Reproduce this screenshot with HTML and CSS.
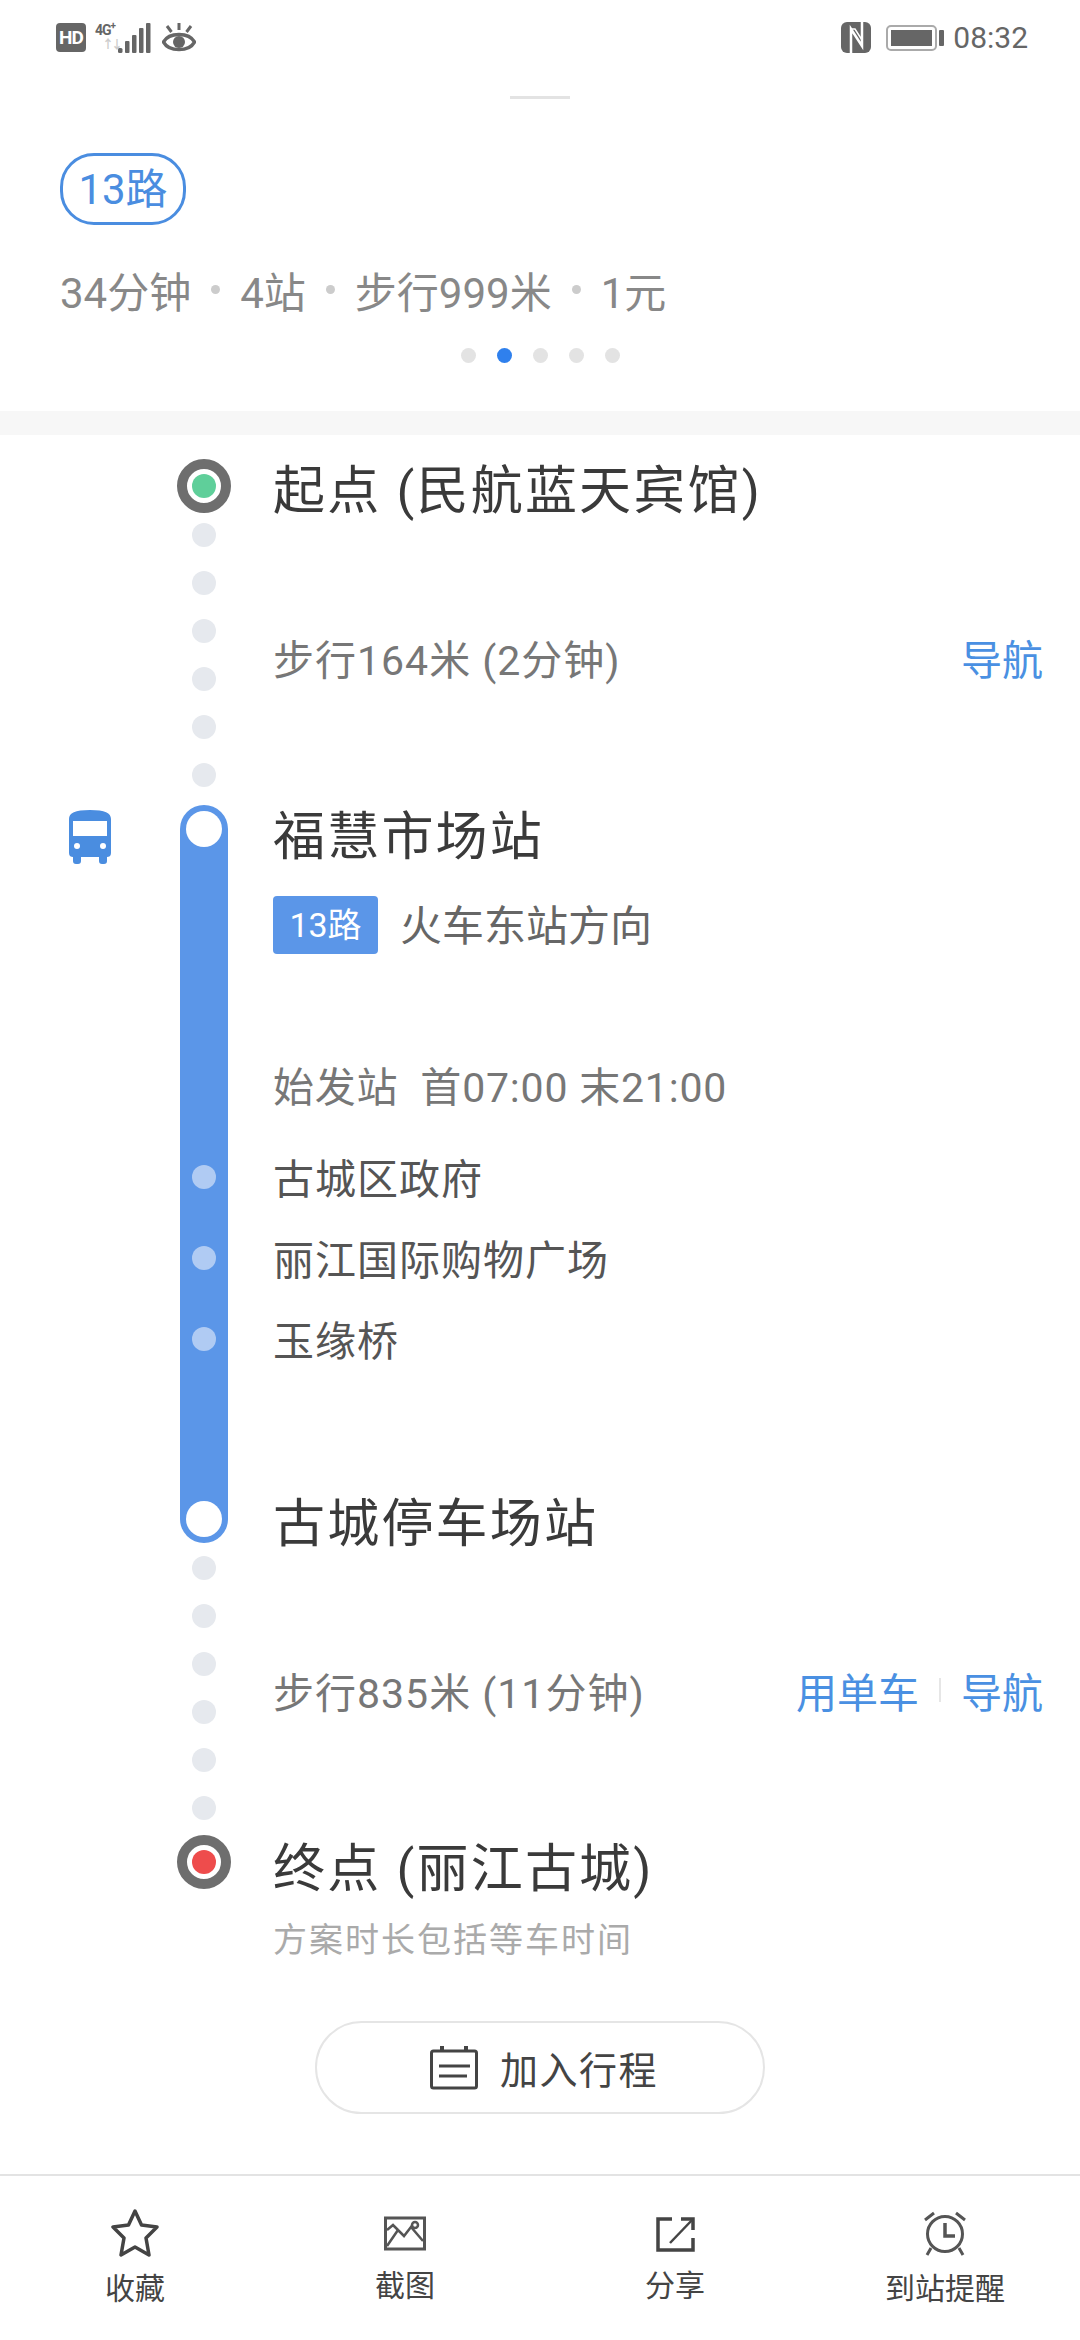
FILE: index.html
```html
<!DOCTYPE html>
<html lang="zh-CN">
<head>
    <meta charset="UTF-8">
    <meta name="viewport" content="width=device-width, initial-scale=1.0">
    <title>公交路线详情</title>
    <link rel="stylesheet" href="styles.css">
</head>
<body>
<div class="page">
    <div class="status-bar">
        <div class="status-left">
            <span class="hd">HD</span>
            <span class="net"><span class="net-label">4G<sup>+</sup></span><span class="net-arrows">↑↓</span></span>
            <svg class="signal" width="33" height="30" viewBox="0 0 33 30">
                <rect x="0" y="25" width="4.5" height="5" rx="1.5"/>
                <rect x="7" y="18" width="4.5" height="12" rx="1"/>
                <rect x="14" y="12" width="4.5" height="18" rx="1"/>
                <rect x="21" y="5" width="4.5" height="25" rx="1"/>
                <rect x="28" y="0" width="4.5" height="30" rx="1"/>
            </svg>
            <svg class="eye" width="34" height="32" viewBox="0 0 34 32">
                <path d="M1.5 20C7 10 27 10 32.5 20C27 30 7 30 1.5 20Z" fill="none" stroke="#666" stroke-width="3.5"/>
                <circle cx="17" cy="20" r="6" fill="#666"/>
                <path d="M17 1V8M5 4L9.5 10M29 4L24.5 10" stroke="#666" stroke-width="3" fill="none"/>
            </svg>
        </div>
        <div class="status-right">
            <svg class="nfc" width="30" height="31" viewBox="0 0 30 31">
                <rect width="30" height="31" rx="6" fill="#666"/>
                <path d="M10 31V7L21 24V0" fill="none" stroke="#fff" stroke-width="2.5"/>
                <path d="M10 7H14L21 18" fill="none" stroke="#fff" stroke-width="1.5"/>
            </svg>
            <span class="battery"><span class="battery-fill"></span></span>
            <span class="battery-tip"></span>
            <span class="clock">08:32</span>
        </div>
    </div>

    <div class="summary">
        <div class="handle"></div>
        <span class="line-chip">13路</span>
        <div class="facts">
            <span>34分钟</span><i></i><span>4站</span><i></i><span>步行999米</span><i></i><span>1元</span>
        </div>
        <div class="pager">
            <span></span><span class="active"></span><span></span><span></span><span></span>
        </div>
    </div>
    <div class="band"></div>

    <div class="route">
        <div class="row row-start">
            <div class="mode"></div>
            <div class="rail"><span class="marker marker-green"></span></div>
            <div class="body"><div class="place">起点 (民航蓝天宾馆)</div></div>
        </div>

        <div class="row row-walk">
            <div class="mode"></div>
            <div class="rail dots"><b></b><b></b><b></b><b></b><b></b><b></b></div>
            <div class="body walk">
                <span class="walk-text">步行164米 (2分钟)</span>
                <span class="links"><a>导航</a></span>
            </div>
        </div>

        <div class="row row-bus">
            <div class="mode">
                <svg class="bus" width="42" height="54" viewBox="0 0 42 54">
                    <path d="M0 9C0 3 6 0 21 0S42 3 42 9V43C42 46 40 47 38 47V51C38 53 37 54 35 54H33C31 54 30 53 30 51V47H12V51C12 53 11 54 9 54H7C5 54 4 53 4 51V47C2 47 0 46 0 43Z" fill="#4a8de0"/>
                    <rect x="4" y="11" width="34" height="15" fill="#fff"/>
                    <circle cx="8" cy="36" r="3" fill="#fff"/>
                    <circle cx="34" cy="36" r="3" fill="#fff"/>
                </svg>
            </div>
            <div class="rail">
                <div class="bar">
                    <span class="stop-end"></span>
                    <span class="stop-dot first"></span>
                    <span class="stop-dot"></span>
                    <span class="stop-dot"></span>
                    <span class="stop-end last"></span>
                </div>
            </div>
            <div class="body">
                <div class="place place-on">福慧市场站</div>
                <div class="line-info">
                    <span class="line-tag">13路</span>
                    <span class="direction">火车东站方向</span>
                </div>
                <div class="times">始发站&nbsp;&nbsp;首07:00&nbsp;末21:00</div>
                <ul class="stops">
                    <li>古城区政府</li>
                    <li>丽江国际购物广场</li>
                    <li>玉缘桥</li>
                </ul>
                <div class="place place-off">古城停车场站</div>
            </div>
        </div>

        <div class="row row-walk">
            <div class="mode"></div>
            <div class="rail dots"><b></b><b></b><b></b><b></b><b></b><b></b></div>
            <div class="body walk">
                <span class="walk-text">步行835米 (11分钟)</span>
                <span class="links"><a>用单车</a><em></em><a>导航</a></span>
            </div>
        </div>

        <div class="row row-end">
            <div class="mode"></div>
            <div class="rail"><span class="marker marker-red"></span></div>
            <div class="body">
                <div class="place">终点 (丽江古城)</div>
                <div class="note">方案时长包括等车时间</div>
            </div>
        </div>
    </div>

    <div class="trip">
        <button class="trip-button">
            <svg width="48" height="44" viewBox="0 0 48 44" fill="none" stroke="#444" stroke-width="3">
                <rect x="1.5" y="5" width="45" height="37" rx="2"/>
                <path d="M12 0V5M36 0V5" stroke-width="4"/>
                <path d="M9 20H40M9 30H37"/>
            </svg>
            <span>加入行程</span>
        </button>
    </div>

    <nav class="tabs">
        <div class="tab tab-low">
            <svg width="50" height="48" viewBox="0 0 50 48" fill="none" stroke="#444" stroke-width="3.5" stroke-linejoin="round">
                <path d="M25 2L31.5 16L47 18L36 29L39 46L25 38L11 46L14 29L3 18L18.5 16Z"/>
            </svg>
            <span>收藏</span>
        </div>
        <div class="tab">
            <svg width="50" height="48" viewBox="0 0 50 48" fill="none" stroke="#555" stroke-width="2.5">
                <rect x="5.5" y="9" width="39" height="31" stroke-width="3"/>
                <path d="M7 37L18 21L24 27L31 18L43 32M7 21L13 16L18 21"/>
                <circle cx="35" cy="16" r="3"/>
            </svg>
            <span>截图</span>
        </div>
        <div class="tab">
            <svg width="50" height="48" viewBox="0 0 50 48" fill="none" stroke="#444" stroke-width="3.5">
                <path d="M22 10H8V41H43V29M31 10H43V21"/>
                <path d="M43 10L20 34" stroke-width="2.5"/>
            </svg>
            <span>分享</span>
        </div>
        <div class="tab tab-low">
            <svg width="50" height="48" viewBox="0 0 50 48" fill="none" stroke="#555" stroke-width="3">
                <circle cx="25" cy="25" r="17.5"/>
                <path d="M25 14V27H35" stroke-width="3.5"/>
                <path d="M5 11L14 4M45 11L36 4M11 39L7 46M39 39L43 46"/>
            </svg>
            <span>到站提醒</span>
        </div>
    </nav>
</div>
</body>
</html>
```

FILE: styles.css
```css
* {
    box-sizing: border-box;
}
body {
    margin: 0;
    background: #fff;
    color: #333;
    font-family: Roboto, "Noto Sans CJK SC", sans-serif;
}
.page {
    width: 1080px;
    height: 2340px;
    display: flex;
    flex-direction: column;
    overflow: hidden;
}

/* status bar */
.status-bar {
    height: 76px;
    padding: 22px 52px 0 56px;
    display: flex;
    justify-content: space-between;
    align-items: flex-start;
}
.status-left, .status-right {
    display: flex;
    align-items: center;
    height: 31px;
}
.hd {
    width: 30px;
    height: 29px;
    border-radius: 4px;
    background: #666;
    color: #fff;
    font-size: 19px;
    font-weight: 700;
    line-height: 29px;
    letter-spacing: -1px;
    text-align: center;
}
.net {
    width: 23px;
    margin-left: 9px;
    display: flex;
    flex-direction: column;
    height: 30px;
    font-size: 14px;
    font-weight: 700;
    line-height: 15px;
    letter-spacing: -1px;
    white-space: nowrap;
    color: #666;
}
.net-label sup {
    font-size: 10px;
    line-height: 0;
}
.net-arrows {
    color: #ccc;
    font-size: 12px;
    letter-spacing: -3px;
    margin-left: 7px;
}
.signal {
    fill: #666;
}
.eye {
    margin-left: 11px;
}
.battery {
    width: 51px;
    height: 26px;
    margin-left: 15px;
    padding: 3px;
    border: 2px solid #aaa;
    border-radius: 5px;
}
.battery-fill {
    display: block;
    height: 100%;
    background: #666;
}
.battery-tip {
    width: 5px;
    height: 16px;
    margin-left: 2px;
    border-radius: 1px;
    background: #666;
}
.clock {
    margin-left: 9px;
    font-size: 30px;
    color: #666;
}

/* summary card */
.summary {
    height: 335px;
    padding: 0 60px;
    display: flex;
    flex-direction: column;
    align-items: flex-start;
}
.handle {
    width: 60px;
    height: 3px;
    align-self: center;
    margin-top: 20px;
    background: #e3e3e3;
}
.line-chip {
    width: 126px;
    height: 72px;
    margin-top: 54px;
    border: 3px solid #4a8de0;
    border-radius: 34px;
    color: #4a8de0;
    font-size: 42px;
    line-height: 68px;
    text-align: center;
}
.facts {
    display: flex;
    align-items: center;
    height: 60px;
    margin-top: 34px;
    color: #888;
    font-size: 42px;
}
.facts i {
    width: 9px;
    height: 9px;
    margin: 0 20px;
    border-radius: 50%;
    background: #ccc;
}
.pager {
    display: flex;
    gap: 21px;
    align-self: center;
    margin-top: 29px;
}
.pager span {
    width: 15px;
    height: 15px;
    border-radius: 50%;
    background: #e3e3e3;
}
.pager .active {
    background: #2f80ed;
}
.band {
    height: 24px;
    background: #f7f7f7;
}

/* route timeline */
.route {
    padding-top: 24px;
}
.row {
    display: flex;
}
.mode {
    width: 177px;
    padding-left: 69px;
    flex-shrink: 0;
}
.rail {
    width: 54px;
    flex-shrink: 0;
    display: flex;
    flex-direction: column;
    align-items: center;
}
.body {
    flex: 1;
    margin-left: 42px;
    padding-right: 37px;
}
.place {
    font-size: 52px;
    line-height: 60px;
    letter-spacing: 2.2px;
    color: #3a3a3a;
}
.row-start .place {
    margin-bottom: -4px;
    padding-top: 3px;
}
.place-on {
    padding-top: 3px;
}
.marker {
    width: 54px;
    height: 54px;
    border: 10px solid #6e6e6e;
    border-radius: 50%;
    display: flex;
    align-items: center;
    justify-content: center;
}
.marker::after {
    content: "";
    width: 24px;
    height: 24px;
    border-radius: 50%;
}
.marker-green::after {
    background: #5fcf9a;
}
.marker-red::after {
    background: #ee4c4c;
}
.row-walk {
    margin-top: 5px;
}
.dots {
    gap: 24px;
}
.dots b {
    width: 24px;
    height: 24px;
    border-radius: 50%;
    background: #e6e9ee;
}
.walk {
    display: flex;
    justify-content: space-between;
    align-items: center;
    padding-top: 4px;
}
.walk-text {
    font-size: 41px;
    letter-spacing: 1px;
    color: #777;
}
.links {
    display: flex;
    align-items: center;
    color: #4a90e2;
    font-size: 41px;
}
.links em {
    width: 2px;
    height: 24px;
    margin: 0 20px;
    background: #e6e6e6;
}
.row-bus {
    margin-top: 18px;
}
.bus {
    display: block;
    margin-top: 5px;
}
.bar {
    width: 48px;
    height: 738px;
    padding: 6px;
    border-radius: 24px;
    background: #5b96e8;
    display: flex;
    flex-direction: column;
    align-items: center;
}
.stop-end {
    width: 36px;
    height: 36px;
    flex-shrink: 0;
    border-radius: 50%;
    background: #fff;
}
.stop-end.last {
    margin-top: auto;
}
.stop-dot {
    width: 24px;
    height: 24px;
    flex-shrink: 0;
    margin-top: 57px;
    border-radius: 50%;
    background: #b0cbf3;
}
.stop-dot.first {
    margin-top: 318px;
}
.line-info {
    display: flex;
    align-items: center;
    margin-top: 24px;
}
.line-tag {
    width: 105px;
    height: 58px;
    border-radius: 4px;
    background: #5b96e8;
    color: #fff;
    font-size: 34px;
    line-height: 58px;
    text-align: center;
}
.direction {
    margin-left: 22px;
    padding-bottom: 4px;
    font-size: 42px;
    color: #666;
}
.times {
    margin-top: 106px;
    font-size: 41px;
    line-height: 50px;
    letter-spacing: 0.8px;
    color: #777;
}
.stops {
    list-style: none;
    margin: 27px 0 0;
    padding: 0;
}
.stops li {
    height: 81px;
    font-size: 41px;
    line-height: 81px;
    letter-spacing: 1px;
    color: #555;
}
.place-off {
    margin-top: 112px;
    margin-bottom: -4px;
}
.row-end {
    margin-top: 15px;
}
.row-end .place {
    padding-top: 5px;
}
.note {
    margin-top: 18px;
    font-size: 34px;
    line-height: 44px;
    letter-spacing: 2px;
    color: #aaa;
}

/* add to trip */
.trip {
    display: flex;
    justify-content: center;
    margin-top: 59px;
}
.trip-button {
    width: 450px;
    height: 93px;
    padding-left: 14px;
    border: 2px solid #e5e5e5;
    border-radius: 47px;
    background: #fff;
    display: flex;
    align-items: center;
    justify-content: center;
    gap: 22px;
    color: #444;
    font-family: inherit;
    font-size: 38px;
    letter-spacing: 1.5px;
}

/* bottom tabs */
.tabs {
    margin-top: auto;
    height: 166px;
    border-top: 2px solid #e3e3e3;
    display: flex;
}
.tab {
    flex: 1;
    padding-top: 33px;
    display: flex;
    flex-direction: column;
    align-items: center;
    color: #444;
    font-size: 30px;
    line-height: 40px;
}
.tab span {
    margin-top: 9px;
}
.tab-low span {
    margin-top: 12px;
}
```
